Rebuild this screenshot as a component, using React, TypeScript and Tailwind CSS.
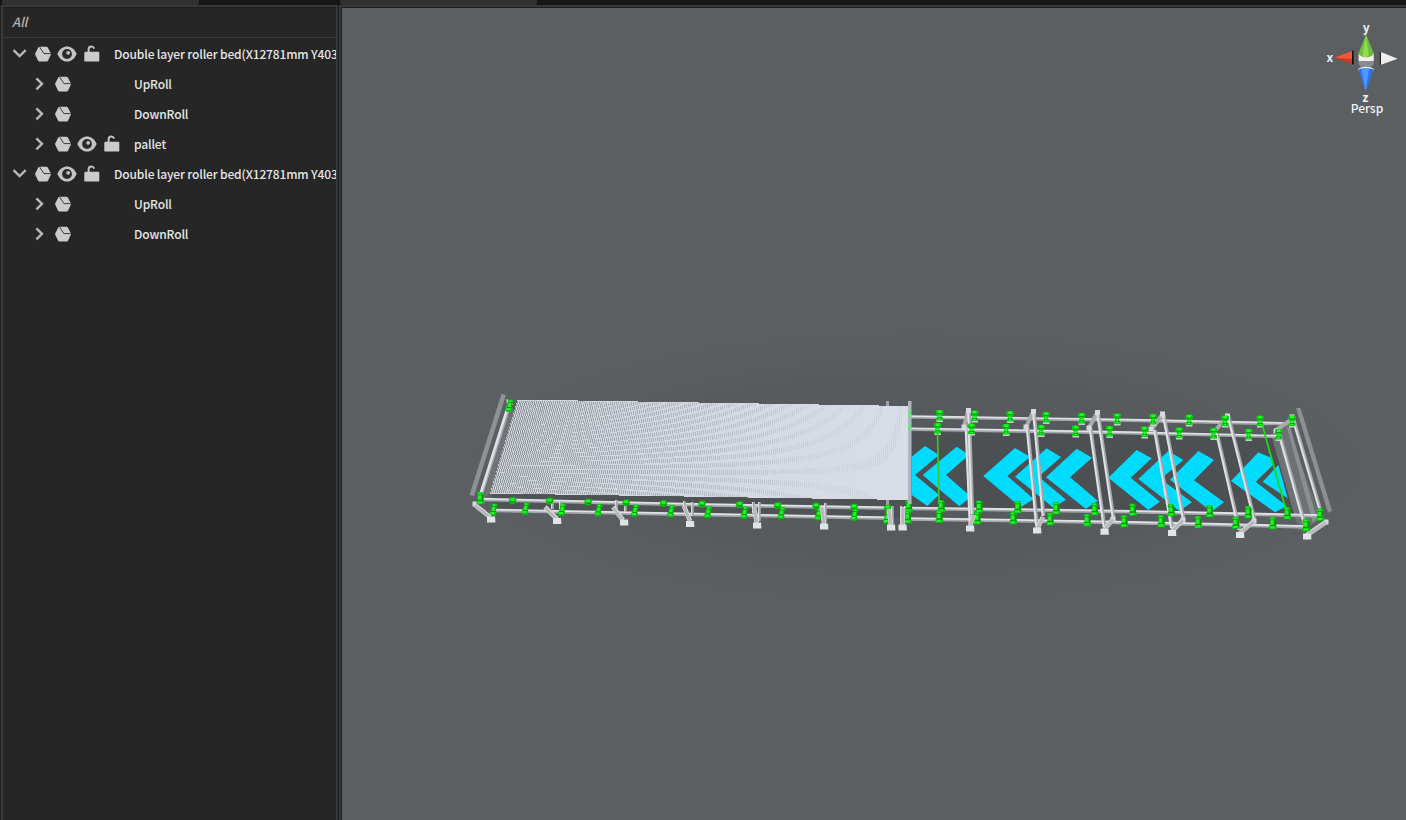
import React from "react";

const font = { fontFamily: "'Noto Sans CJK SC', 'Noto Sans', sans-serif" };

const bed = "Double layer roller bed(X12781mm Y403";

const rows = [
  { depth: 0, open: true, controls: true, label: bed },
  { depth: 1, open: false, controls: false, label: "UpRoll" },
  { depth: 1, open: false, controls: false, label: "DownRoll" },
  { depth: 1, open: false, controls: true, label: "pallet" },
  { depth: 0, open: true, controls: true, label: bed },
  { depth: 1, open: false, controls: false, label: "UpRoll" },
  { depth: 1, open: false, controls: false, label: "DownRoll" },
];

function Arrow({ open }: { open: boolean }) {
  return (
    <svg className="h-4 w-4 shrink-0" viewBox="0 0 16 16" fill="none" stroke="#b8b8b8" strokeWidth="2.4">
      <path d={open ? "M2.6 4.2L8.6 10L14.7 4.2" : "M5.4 2.3L11 7.8L5.4 13.3"} />
    </svg>
  );
}

function Cube() {
  return (
    <svg className="h-4 w-4 shrink-0" viewBox="0 0 16 16">
      <path d="M4.9 .8H11.2Q12.5 .8 13.1 1.9L15.8 7.2Q16.1 8 15.8 8.8L13.1 14.4Q12.5 15.6 11.2 15.6H4.9Q3.6 15.6 3 14.4L.3 9Q0 8.2 .3 7.3L3 1.9Q3.6 .8 4.9 .8Z" fill="#cbcbcb" />
      <path d="M4.8 1.2L8.9 7.6H15.8" fill="none" stroke="#3c3c3c" strokeWidth="1" />
    </svg>
  );
}

function Eye() {
  return (
    <svg className="h-4 w-5 shrink-0" viewBox="0 0 20 16">
      <path d="M.3 8C2.8 2.7 6.2 .6 10 .6S17.2 2.7 19.7 8C17.2 13.3 13.8 15.6 10 15.6S2.8 13.3 .3 8Z" fill="#c4c4c4" />
      <circle cx="10" cy="8" r="4.9" fill="#2b2b2b" />
      <circle cx="11.2" cy="6.8" r="1.9" fill="#c4c4c4" />
    </svg>
  );
}

function Lock() {
  return (
    <svg className="h-[18px] w-4 shrink-0" viewBox="0 0 16 18">
      <path d="M4.6 9V5.4Q4.6 2.6 7.3 2.6Q9.4 2.6 10.2 4.6" fill="none" stroke="#c4c4c4" strokeWidth="2" />
      <rect x=".3" y="7.8" width="15" height="9.8" rx="1.2" fill="#cbcbcb" />
    </svg>
  );
}

function TreeRow({ row }: { row: (typeof rows)[number] }) {
  return (
    <div className={`flex h-[30px] items-center whitespace-nowrap ${row.depth ? "pl-[28px]" : "pl-[8px]"}`}>
      <Arrow open={row.open} />
      <div className="ml-2 flex h-4 w-[79px] shrink-0 items-center">
        <Cube />
        {row.controls && (
          <div className="ml-1.5 flex items-center gap-[7px]">
            <Eye />
            <div className="-mt-[3px] flex">
              <Lock />
            </div>
          </div>
        )}
      </div>
      <span className="text-[12px] font-medium leading-[18px] tracking-[-0.14px] text-[#e6e6e6]">{row.label}</span>
    </div>
  );
}

type Pt = [number, number];
type Seg = [number, number, number, number];

const ROLLERS = 206;
const gaps = Array.from({ length: ROLLERS }, (_, i) => {
  const f = i / ROLLERS;
  const w = 1.0 - 0.8 * f;
  const top = 517.5 + 391.5 * f;
  const bottom = 490.5 + 418.5 * f;
  const y0 = 400.5 + 6 * f;
  const y1 = 493 + 6.5 * f;
  const k = Math.min(1, f * 1.25);
  const c = (a: number, b: number) => Math.round(a + (b - a) * k);
  return {
    d: `M${top} ${y0}h${w}L${bottom + w} ${y1}h${-w}Z`,
    fill: `rgb(${c(146, 206)},${c(151, 211)},${c(158, 220)})`,
  };
});

const chevronsA = [
  "75,153 117,180 45,240 117,299 82,333 35,300 35,185",
  "68,240 170,155 207,180 138,240 213,305 178,334",
  "250,243 345,159 390,185 322,243 401,312 362,337",
  "345,245 440,160 483,186 416,245 498,314 460,338",
  "438,247 530,161 576,188 510,247 594,318 557,341",
];
const chevronsB = [
  "-5,248 80,165 125,190 62,248 150,320 115,345",
  "85,252 175,168 220,195 152,252 246,322 208,348",
  "180,254 265,168 312,195 252,256 342,322 305,350",
  "363,258 445,172 483,188 492,207 437,260 530,333 495,352",
  "458,260 505,210 533,310",
];

const longBeams: Seg[] = [
  [909, 416.5, 1130, 420], [1130, 420, 1293, 423.5],
  [909, 428.7, 1130, 432.5], [1130, 432.5, 1278, 436],
];
const frontBeams: Seg[] = [
  [909, 508, 1130, 511.3], [1130, 511.3, 1322, 515.5],
  [905, 518.5, 1130, 522.2], [1130, 522.2, 1306, 526.5],
  [480, 499, 693, 504.3], [693, 504.3, 892, 507.7],
  [493, 510, 693, 514], [693, 514, 892, 517.7],
];
const frames: Seg[] = [
  [966, 427, 970, 523], [968.5, 411, 972, 514],
  [1027, 427, 1036.5, 526], [1033.5, 412, 1043, 516],
  [1090, 428, 1104, 527], [1097.5, 413, 1113, 517],
  [1154.5, 430, 1171.5, 528], [1163, 414, 1183, 518],
  [1216.5, 433, 1239, 530], [1228, 416, 1254, 519],
  [1279, 434, 1306, 530], [1293, 419, 1322, 517],
];
const struts: Seg[] = [
  [964, 427, 968, 411], [1026, 427, 1033, 412], [1089, 428, 1097, 413],
  [1152, 429, 1162, 415], [1214, 432, 1227, 417], [1275, 431, 1292, 419],
  [970, 526, 974, 515], [1037, 529, 1043, 517], [1104, 530, 1113, 519],
  [1172, 531, 1183, 520], [1240, 533, 1254, 521], [1307, 535, 1326, 522],
  [475, 505, 490, 517], [545, 507, 557, 519], [613, 507, 623, 520],
  [684, 506, 690, 521], [754, 507, 757, 523], [822, 507, 824, 524],
  [889, 509, 891, 526], [903, 507, 902.5, 526],
];
const feet: Pt[] = [
  [491, 519.5], [557, 521], [624, 522.5], [690, 524], [757, 525.5], [824, 526.5], [891, 527.5], [902.5, 527.5],
  [970, 528.5], [1037, 530.5], [1104.5, 531.8], [1172, 533], [1240, 535], [1307, 536.5],
];
const heads: Pt[] = [
  [964, 427], [1026, 427], [1089, 428], [1151, 429], [1214, 431], [1276, 431],
  [968.5, 410.5], [1033.5, 411.5], [1097.5, 412.5], [1162.5, 414], [1227.5, 416], [1292, 417],
  [1326, 522], [1254, 521], [1183, 520], [1113, 519], [475, 504],
];
const posts: Seg[] = [
  [552, 500, 552, 509], [560, 501, 560, 512], [616, 500, 616, 509], [625, 502, 625, 512],
  [684, 501, 684, 510], [692, 502, 692, 516], [753, 502, 753, 513], [759, 502, 759, 521],
  [819, 505, 819, 513], [825, 503, 825, 522], [887, 505, 887, 523], [892, 506, 892, 524],
  [901, 506, 901, 524], [905, 506, 905, 520],
];

const farMotors: Pt[] = [
  [939.5, 415], [974.5, 415.5], [1010, 416], [1046, 417], [1081.5, 418], [1117, 418.5], [1153, 419], [1189, 419.5],
  [1225, 420.5], [1260, 420.5], [1292, 420.5],
  [937.5, 428], [971.5, 428.5], [1006, 429], [1041, 430], [1075.5, 430.5], [1109.5, 431], [1144.5, 431.5],
  [1179, 432.5], [1213.5, 433], [1248.5, 434], [1278.5, 434],
];
const nearMotors: Pt[] = [
  [908.5, 506], [941, 506], [979, 506.5], [1017.5, 507], [1056, 508], [1094.5, 509], [1132.5, 509.5], [1171, 510],
  [1209.5, 511], [1248, 512], [1287, 513], [1320, 514.5],
  [907.5, 517], [939, 516.5], [977, 518], [1013, 518], [1050, 519], [1087, 520], [1124, 521], [1161, 521],
  [1198, 522], [1235.5, 522.5], [1272.5, 523], [1306, 525],
];
const leftSmall: Pt[] = [
  [512.5, 500.5], [549.5, 501], [588, 502], [626, 502.7], [663.5, 503.5], [702, 504], [739.5, 504.5],
  [777.5, 505.5], [816, 506], [854, 507], [887.5, 508],
];
const leftTall: Pt[] = [
  [493.5, 509.5], [525.5, 508.5], [562, 509.5], [598.5, 510], [635, 510.5], [671, 511], [708, 512], [744.5, 512.5],
  [781.5, 513], [818.5, 514], [854.5, 514.5], [887, 517.5],
];

function Beam({ s, w = 3 }: { s: Seg; w?: number }) {
  const [x1, y1, x2, y2] = s;
  const steep = Math.abs(y2 - y1) > Math.abs(x2 - x1);
  const dx = steep ? 0.8 : 0;
  const dy = steep ? 0 : 0.8;
  return (
    <g>
      <line x1={x1 + dx} y1={y1 + dy} x2={x2 + dx} y2={y2 + dy} stroke="#a4a6a9" strokeWidth={w} />
      <line x1={x1 - dx / 2} y1={y1 - dy / 2} x2={x2 - dx / 2} y2={y2 - dy / 2} stroke="#dfe2e8" strokeWidth={w - 1} />
    </g>
  );
}

function FarMotor({ p }: { p: Pt }) {
  return (
    <g transform={`translate(${p[0]} ${p[1]})`}>
      <rect x="-3" y="2" width="6.5" height="5" fill="#c9cdd2" />
      <path d="M-2.5 -5H3L4 -3.5L3.5 -.5L2 .5V2L3.5 3V5.5H-3.5V3L-2 2V.5L-3.5 -1V-4Z" fill="#08d010" />
      <path d="M-1.5 -4.5H1.8V-2H-1.5ZM-1.2 .6H1.2V4.6H-1.2Z" fill="#27ff35" />
      <path d="M-3 -1.7H3.4V-1H-3ZM-2 2.5H3V3.2H-2Z" fill="#079010" />
    </g>
  );
}

function NearMotor({ p }: { p: Pt }) {
  return (
    <g transform={`translate(${p[0]} ${p[1]})`}>
      <path d="M-2.5 -6H2L3.5 -4V2L4.2 3V6.3H-3.5V3L-2.5 1.5V-2.5L-3.5 -4Z" fill="#08c00e" />
      <path d="M-1.8 -5.2H1.2V1.6H-1.8ZM-2.4 3.4H2.2V5.4H-2.4Z" fill="#23f42c" />
      <path d="M2 -3H3.3V2H2ZM-2.5 2.2H3.5V3H-2.5ZM-2.5 -3.4H2.5V-2.8H-2.5Z" fill="#068a0a" />
    </g>
  );
}

function SmallMotor({ p }: { p: Pt }) {
  return (
    <g transform={`translate(${p[0]} ${p[1]})`}>
      <path d="M-3 -2.5L-1 -3.2H3L4 -1.5L3.2 2.2L1 3.5H-2L-3.8 1Z" fill="#08c00e" />
      <path d="M-2 -2.2H2V.2H-2Z" fill="#24f62c" />
      <path d="M-2 1H3V1.8H-2Z" fill="#068a0a" />
    </g>
  );
}

function TallMotor({ p }: { p: Pt }) {
  return (
    <g transform={`translate(${p[0]} ${p[1]})`}>
      <path d="M-1.3 -6H3.3L4.2 -4L3 -2L2.4 2.5L3.3 3.5L2.2 6.2H-3.2L-4.2 4L-3.2 1.5L-2.4 0L-1.8 -3Z" fill="#08c00e" />
      <path d="M-.4 -5.2H2L1 1.5H-1.6ZM-3 2.6H1V4.6H-3Z" fill="#24f62c" />
      <path d="M-1.5 -3.2H3V-2.6H-1.5ZM-2.5 1.6H2V2.3H-2.5Z" fill="#068a0a" />
    </g>
  );
}

function Scene() {
  return (
    <svg className="block h-[812px] w-[1064px]" viewBox="342 8 1064 812">
      <defs>
        <radialGradient id="shade">
          <stop offset="0" stopColor="#54585a" />
          <stop offset=".65" stopColor="#565a5c" stopOpacity=".8" />
          <stop offset="1" stopColor="#5b5f62" stopOpacity="0" />
        </radialGradient>
        <linearGradient id="deck">
          <stop offset="0" stopColor="#ced3da" />
          <stop offset="1" stopColor="#d8dde7" />
        </linearGradient>
      </defs>
      <ellipse cx="915" cy="467" rx="465" ry="142" fill="url(#shade)" />

      <path d="M909 432L1276 437L1300 516L909 509Z" fill="#4d5052" />
      <path d="M492 494L909 500V518L492 511Z" fill="#505355" />
      <path d="M1272 438L1287 425L1321 519L1299 531Z" fill="#6f7275" />

      <path d="M501.5 394L506 395L474 496L469.5 495Z" fill="#8d9297" />
      <path d="M510 405L515 413L491 492L483 499Z" fill="#707275" />
      <Beam s={[508.5, 406, 480.5, 495]} w={3.5} />
      <path d="M506 399L512 401L513 405L507 404Z" fill="#c3c8ce" />

      <g fill="#00dcff">
        <g transform="translate(900 395) scale(.33333)">
          {chevronsA.map((p) => <polygon key={p} points={p} />)}
        </g>
        <g transform="translate(1110 395) scale(.33333)">
          {chevronsB.map((p) => <polygon key={p} points={p} />)}
        </g>
      </g>

      <path d="M1296 408L1300.5 408L1332 511L1328 512.5Z" fill="#8b9095" />
      <path d="M1287 428L1290 426L1317 519L1313 523Z" fill="#8b8e92" />

      {longBeams.map((s, i) => <Beam key={i} s={s} w={2.6} />)}
      {struts.slice(0, 6).map((s, i) => <line key={i} x1={s[0]} y1={s[1]} x2={s[2]} y2={s[3]} stroke="#aaaaac" strokeWidth="4" />)}
      {frontBeams.map((s, i) => <Beam key={i} s={s} w={2.8} />)}
      {posts.map((s, i) => <Beam key={i} s={s} w={2} />)}
      {frames.map((s, i) => <Beam key={i} s={s} w={3} />)}
      {heads.map((p, i) => <rect key={i} x={p[0] - 2.5} y={p[1] - 2.5} width="5" height="5" fill="#d7dae0" />)}
      {farMotors.map((p, i) => <FarMotor key={i} p={p} />)}
      {leftSmall.map((p, i) => <SmallMotor key={i} p={p} />)}
      {leftTall.map((p, i) => <TallMotor key={i} p={p} />)}
      {nearMotors.map((p, i) => <NearMotor key={i} p={p} />)}
      {struts.slice(6).map((s, i) => (
        <g key={i}>
          <line x1={s[0]} y1={s[1]} x2={s[2]} y2={s[3]} stroke="#d7d9dd" strokeWidth="4.6" />
          <line x1={s[0]} y1={s[1] + 0.5} x2={s[2]} y2={s[3] + 0.5} stroke="#b8b8b9" strokeWidth="3" />
        </g>
      ))}
      {feet.map((p, i) => <path key={i} d={`M${p[0] - 4} ${p[1] - 3}h8l.4 6h-8.4z`} fill="#dfe3ea" />)}
      <NearMotor p={[1306, 525]} />
      <NearMotor p={[1320, 514.5]} />
      <NearMotor p={[480, 498]} />
      <g fill="none">
        <path d="M937.5 431L939 504" stroke="#35c827" strokeWidth="1.7" />
        <path d="M1262 424L1286 510" stroke="#20d51a" strokeWidth="1.8" />
      </g>

      <path d="M517.5 399.5L909 406V500L490 493.5Z" fill="url(#deck)" shapeRendering="crispEdges" />
      <g shapeRendering="crispEdges">
        {gaps.map((g) => <path key={g.d} d={g.d} fill={g.fill} />)}
      </g>
      <TallMotor p={[509.5, 405.5]} />
      <path d="M886 401H889V406H886ZM886 500H889V505H886Z" fill="#9da3a8" />
      <path d="M908 401H911.5V504H908Z" fill="#aeb7bd" />
      <path d="M908 410H911V417H908ZM908 424H911V430H908Z" fill="#78db86" />

      <g transform="translate(1306 10) scale(.33333)">
        <path d="M158 130H203V160Q202 171 180 175Q158 171 158 160Z" fill="#8b8b8b" />
        <path d="M158 130H203V153H158Z" fill="#efefef" />
        <path d="M180 73L204 132Q194 142 180 142Q167 142 157 132Z" fill="#6ebe3c" />
        <path d="M180 73L188 138Q178 143 169 139Z" fill="#93dc55" />
        <path d="M157 176Q164 170 180 170Q195 170 203 176V182H157Z" fill="#f0f0f0" />
        <path d="M157 178Q180 172 203 178L179 246Z" fill="#3272e0" />
        <path d="M166 176Q178 173 189 176L179 244Z" fill="#4c9aff" />
        <path d="M138 122H143V163H138Z" fill="#111" />
        <path d="M85 143L138 122V163Z" fill="#c93a27" />
        <path d="M85 143L138 124V147Z" fill="#f4573c" />
        <path d="M221 126H226V164H221Z" fill="#292929" />
        <path d="M225 126L275 146L225 164Z" fill="#ededed" />
      </g>
      <g fontFamily="'Noto Sans CJK SC', sans-serif" textAnchor="middle" fill="#f0f0f0">
        <text x="1366.3" y="32" fontSize="12" fontWeight="700">y</text>
        <text x="1329.8" y="61.5" fontSize="12" fontWeight="700">x</text>
        <text x="1365.3" y="101.7" fontSize="12" fontWeight="700">z</text>
        <text x="1367" y="112.5" fontSize="12" fontWeight="500">Persp</text>
      </g>
    </svg>
  );
}

export default function App() {
  return (
    <div className="flex h-[820px] w-[1406px] flex-col overflow-hidden bg-[#161616]" style={font}>
      <div className="flex h-[5px] shrink-0">
        <div className="ml-0.5 h-[5px] w-[197px] rounded-b-[2px] bg-[#303030]" />
        <div className="ml-[141px] h-[5px] w-[197px] rounded-b-[2px] bg-[#303030]" />
      </div>
      <div className="flex min-h-0 flex-1">
        <aside className="flex w-[338px] shrink-0 flex-col border-l border-[#202020]">
          <div className="flex min-h-0 flex-1 flex-col border-2 border-b-0 border-[#383838] bg-[#262626]">
            <div className="flex h-[31px] shrink-0 items-center border-b border-t border-b-[#3a3a3a] border-t-[#202020] pb-0.5 pl-[9px]">
              <span className="text-[13px] font-medium italic leading-[18px] tracking-[-0.2px] text-[#b0b0b0]">All</span>
            </div>
            <div className="w-[333px] overflow-hidden pt-[1px]">
              {rows.map((r, i) => <TreeRow key={i} row={r} />)}
            </div>
          </div>
        </aside>
        <main className="ml-px flex-1 border-l-2 border-t-2 border-[#383838]">
          <div className="h-full overflow-hidden border-l border-t border-[#202020] bg-[#5b5f62]">
            <Scene />
          </div>
        </main>
      </div>
    </div>
  );
}
